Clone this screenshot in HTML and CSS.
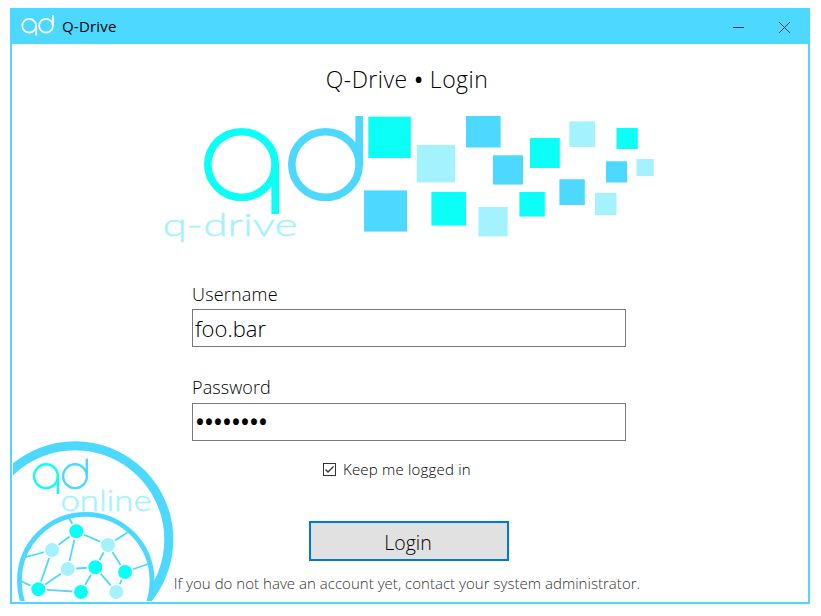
FILE: index.html
```html
<!DOCTYPE html>
<html lang="en">
<head>
<meta charset="utf-8">
<title>Q-Drive</title>
<link rel="stylesheet" href="styles.css">
</head>
<body>
<main class="window">
  <header class="titlebar">
    <svg class="app-icon" width="34" height="24" viewBox="0 0 34 24" fill="none" stroke="#fff" stroke-width="1.7">
      <circle cx="8.2" cy="11.8" r="6.9"/><path d="M15.2 11.5V21.6"/>
      <circle cx="25" cy="11.8" r="6.9"/><path d="M32 12V1"/>
    </svg>
    <span class="app-name">Q-Drive</span>
    <svg class="control" width="46" height="36" viewBox="0 0 46 36" stroke="#24323a"><path d="M18 19.5H29"/></svg>
    <svg class="control" width="46" height="36" viewBox="0 0 46 36" stroke="#24323a"><path d="M18 14L29 25M29 14L18 25"/></svg>
  </header>
  <div class="content">
    <h1 class="title">Q-Drive <span class="dot">•</span> Login</h1>
    <svg class="logo" width="500" height="130" viewBox="160 112 500 130">
      <g fill="none" stroke-width="7.6">
        <ellipse cx="241.5" cy="164.5" rx="33.7" ry="32.8" class="cyan-line"/>
        <path d="M275.2 164V214" class="cyan-line"/>
        <ellipse cx="325.5" cy="164.5" rx="33.7" ry="32.8" class="blue-line"/>
        <path d="M359.2 165V116" class="blue-line"/>
      </g>
      <text class="wordmark" x="162.5" y="235.5" font-size="32" textLength="135" lengthAdjust="spacingAndGlyphs">q-drive</text>
      <g class="cyan">
        <rect x="368.3" y="116.7" width="42.5" height="41.3"/>
        <rect x="530" y="138" width="29.8" height="30"/>
        <rect x="616.5" y="128" width="21.3" height="21"/>
        <rect x="431.4" y="192" width="34.6" height="33.6"/>
        <rect x="519.4" y="192" width="25.4" height="24.6"/>
      </g>
      <g class="blue">
        <rect x="364" y="190.4" width="43" height="41.2"/>
        <rect x="466" y="116" width="34.6" height="31.5"/>
        <rect x="493" y="155.3" width="30" height="29.3"/>
        <rect x="606" y="161.3" width="21" height="21.2"/>
        <rect x="559.4" y="179.3" width="25.4" height="25.7"/>
      </g>
      <g class="light">
        <rect x="416.7" y="145" width="38.3" height="37.4"/>
        <rect x="569.3" y="121.4" width="25.7" height="25.6"/>
        <rect x="636.5" y="159" width="17.2" height="17"/>
        <rect x="595" y="193" width="21.5" height="22"/>
        <rect x="478.4" y="207" width="29.3" height="29.4"/>
      </g>
    </svg>
    <form class="form">
      <label class="label" for="user">Username</label>
      <input class="field" id="user" type="text" value="foo.bar">
      <label class="label second" for="pass">Password</label>
      <input class="field secret" id="pass" type="password" value="password">
      <div class="remember">
        <svg width="13" height="13" viewBox="0 0 13 13" fill="none" stroke="#333"><rect x=".5" y=".5" width="12" height="12"/><path d="M2.5 6.5L5 9L10.5 3.5" stroke-width="1.3"/></svg>
        <span>Keep me logged in</span>
      </div>
      <button class="submit" type="button">Login</button>
    </form>
    <p class="hint">If you do not have an account yet, contact your system administrator.</p>
  </div>
  <svg class="badge" width="162" height="161" viewBox="13 440 162 161">
    <g fill="none">
      <circle cx="75" cy="539.6" r="93.8" stroke-width="9" class="blue-line"/>
      <circle cx="85.7" cy="580.7" r="66.3" stroke-width="4.8" fill="#fff" class="blue-line"/>
      <g stroke-width="2.4">
        <circle cx="46" cy="476.2" r="11.9" class="cyan-line"/><path d="M57.8 476V494" class="cyan-line"/>
        <circle cx="75" cy="476.2" r="11.9" class="blue-line"/><path d="M86.8 476V458.7" class="blue-line"/>
      </g>
      <g class="blue-line" stroke-width="1.8">
        <path d="M68.5 517L76.3 531.3L52 550L26 557M76.3 531.3L108 545L127.5 532.5M76.3 531.3L67.7 569L38.3 589.3L20.5 581M52 550L38.3 589.3L81 592L95.3 567.3L67.7 569M108 545L95.3 567.3L116.3 592L125 572L108 545M125 572L148 564"/>
      </g>
    </g>
    <text class="wordmark" x="60.5" y="510.5" font-size="30" textLength="91" lengthAdjust="spacingAndGlyphs">online</text>
    <g class="cyan nodes"><circle cx="76.3" cy="531.3" r="7.8"/><circle cx="95.3" cy="567.3" r="7.8"/><circle cx="125" cy="572" r="7.8"/><circle cx="38.3" cy="589.3" r="7.8"/><circle cx="81" cy="592" r="7.8"/></g>
    <g class="light nodes"><circle cx="52" cy="550" r="7.8"/><circle cx="108" cy="545" r="7.8"/><circle cx="67.7" cy="569" r="7.8"/><circle cx="116.3" cy="592" r="7.8"/></g>
  </svg>
</main>
</body>
</html>
```
FILE: styles.css
```css
* { box-sizing: border-box; }
body {
  margin: 0;
  padding: 8px 11px 12px 10px;
  background: #fff;
  color: #000;
  font-family: "Open Sans", "Noto Sans", sans-serif;
  font-weight: 300;
}
.window {
  position: relative;
  width: 800px;
  height: 596px;
  border: 2px solid #4dd8ff;
  border-top: 0;
  background: #fff;
}
.titlebar {
  display: flex;
  align-items: center;
  height: 36px;
  padding: 0 1px 0 9px;
  background: #4dd8ff;
}
.app-icon { margin-right: 7px; }
.app-name { flex: 1; font-size: 15px; font-weight: 400; letter-spacing: .2px; line-height: 36px; }
.content { display: flex; flex-direction: column; align-items: center; }
.title { margin: 18px 6px 1px 0; height: 34px; line-height: 34px; font-size: 23px; font-weight: 300; letter-spacing: .5px; }
.dot { font-weight: 600; }
.logo { margin-top: 15px; }
.cyan { fill: #0cfff7; }
.blue { fill: #4dd8ff; }
.light { fill: #a5f2ff; }
.cyan-line { stroke: #0cfff7; }
.blue-line { stroke: #4dd8ff; }
.nodes { stroke: #fff; stroke-width: 1.6px; }
.wordmark { fill: #a5f2ff; stroke: #a5f2ff; stroke-width: .4px; font-family: Lato, sans-serif; font-weight: 300; }
.form { display: flex; flex-direction: column; width: 434px; margin: 37px 2px 0 0; }
.label { height: 30px; line-height: 31px; font-size: 18px; letter-spacing: .2px; }
.second { margin-top: 26px; line-height: 28px; letter-spacing: .1px; }
.field {
  height: 38px;
  padding: 0 2px;
  border: 1px solid #7a7a7a;
  border-radius: 0;
  background: #fff;
  color: #000;
  font: 300 22px "Open Sans", sans-serif;
}
.secret { font-size: 21px; font-weight: 700; letter-spacing: 1.1px; padding-left: 3px; }
.remember { display: flex; align-items: center; gap: 7px; height: 20px; margin: 18px 0 0 131px; font-size: 15px; letter-spacing: .2px; }
.submit {
  align-self: center;
  width: 200px;
  height: 40px;
  margin-top: 42px;
  padding: 3px 2px 0 0;
  border: 2px solid #0078d7;
  background: #e1e1e1;
  color: #000;
  font: 300 19.5px "Open Sans", sans-serif;
}
.hint { margin: 11px 6px 0 0; height: 22px; line-height: 22px; font-size: 15px; letter-spacing: .03px; color: #333; white-space: nowrap; }
.badge { position: absolute; left: 1px; bottom: 1px; }
```
